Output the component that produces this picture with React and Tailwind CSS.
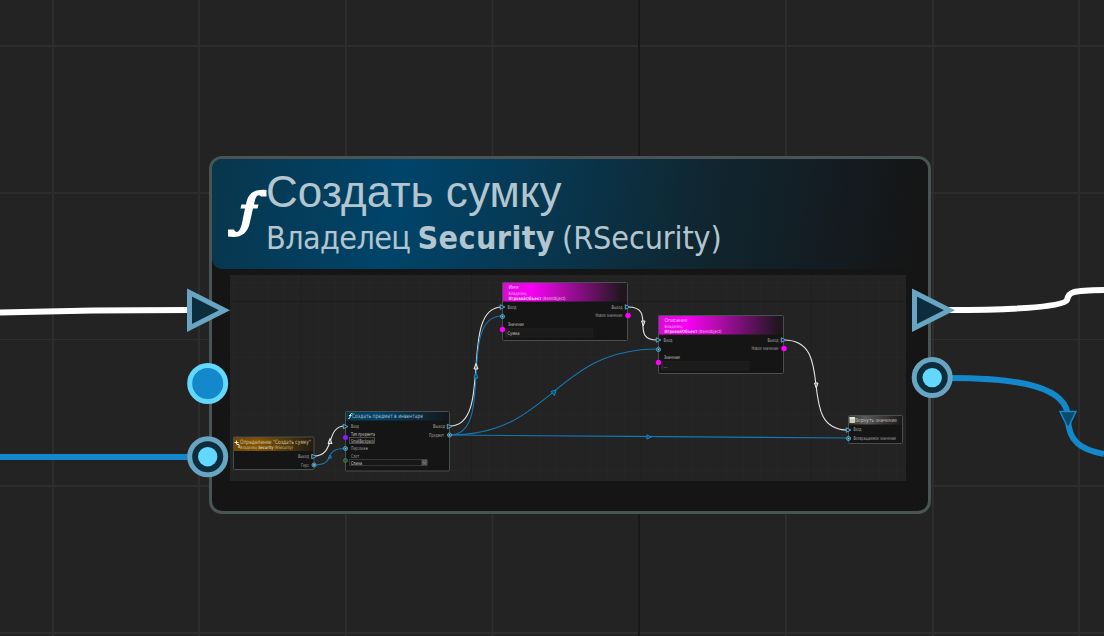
import React from 'react';

const gridX = [53, 199, 346, 492.5, 786, 933, 1079];
const gridY = [46, 193, 486, 633];
const miniX = [233, 250, 267, 284, 318, 335, 352, 369, 386, 403, 420, 437, 454, 488, 505, 522, 539, 556, 573, 590, 607, 624, 658, 675, 692, 709, 726, 743, 760, 777, 794, 828, 845, 862, 879, 896];
const miniY = [282.5, 357.5, 414.5, 470.5];

const tri = (x, y, s = 1) => `M${x - 3 * s} ${y - 3 * s}L${x + 3.2 * s} ${y}L${x - 3 * s} ${y + 3 * s}Z`;

function Label({ x, y, w, size = 5, className = '', children, color = '#aaa' }) {
  return (
    <text x={x} y={y} textLength={w} lengthAdjust="spacingAndGlyphs" fontSize={size} fill={color} className={className} fontFamily="'DejaVu Sans','Noto Sans',sans-serif">
      {children}
    </text>
  );
}

function Frame({ x, y, w, h, head, fill }) {
  return (
    <g>
      <rect x={x} y={y} width={w} height={h} rx="1" fill="#151515" />
      <rect x={x} y={y} width={w} height={head} fill={fill} />
      <rect x={x} y={y} width={w} height={h} rx="1" fill="none" stroke="#46504f" />
    </g>
  );
}

function ExecPin({ x, y }) {
  return <path d={tri(x, y, 0.75)} fill="#0d2a36" stroke="#63a5c4" strokeWidth="1" />;
}

function DataPin({ x, y }) {
  return (
    <g>
      <circle cx={x} cy={y} r="2" fill="#0d2a36" stroke="#5fa8c8" strokeWidth="1" />
      <circle cx={x} cy={y} r="1" fill="#62d8ff" />
    </g>
  );
}

function Backdrop() {
  return (
    <svg className="absolute inset-0" width="1104" height="636">
      {gridX.map((x) => <path key={x} d={`M${x} 0V636`} stroke="#2d2d2d" strokeWidth="2" />)}
      {gridY.map((y) => <path key={y} d={`M0 ${y}H1104`} stroke="#2d2d2d" strokeWidth="2" />)}
      <path d="M0 339.5H1104" stroke="#2e2e2e" />
      <path d="M639 0V636" stroke="#181818" strokeWidth="2" />
      <g fill="none" strokeWidth="6">
        <path d="M0 312.5C55 311 110 310 190 310" stroke="#fff" />
        <path d="M948 310C1000 310 1065 308 1067 300C1069 292 1071 290.5 1104 290" stroke="#fff" />
        <path d="M0 457H190" stroke="#1388ca" />
        <path d="M950 378C1020 378 1068 387 1068 418C1068 442 1082 450 1104 454" stroke="#1388ca" />
      </g>
      <path d="M1060 411.5H1076L1068 428Z" fill="#0a4a6c" stroke="#1388ca" strokeWidth="1.5" />
    </svg>
  );
}

function MagentaNode({ x, y, title, titleW, value, vw, inY }) {
  return (
    <g>
      <Frame x={x} y={y} w={125} h={58} head={19} fill="url(#pink)" />
      <Label x={x + 6} y={y + 6.5} w={titleW} size={5.5} color="#ffb5ff">{title}</Label>
      <Label x={x + 6} y={y + 12} w={18} size={4.5} color="#ffb5ff">Владелец</Label>
      <Label x={x + 6} y={y + 17} w={57} size={4.5} color="#f5c8f3"><tspan fontWeight="bold">ИгровойОбъект</tspan> (ItemObject)</Label>
      <Label x={x + 5} y={y + 26} w={9}>Вход</Label>
      <Label x={x + 109} y={y + 26} w={11}>Выход</Label>
      <Label x={x + 93} y={y + 34.5} w={27}>Новое значение</Label>
      <Label x={x + 5.5} y={y + 43.5} w={16} color="#d0c8bd">Значение</Label>
      <rect x={x + 3.5} y={y + 46} width="87" height="8.5" fill="#1b1b1b" stroke="#242424" strokeWidth=".5" />
      <path d={`M${x + 3.5} ${y + 46}v8.5`} stroke="#343434" />
      <Label x={x + 5} y={y + 52} w={vw} color="#d0c8bd">{value}</Label>
      <ExecPin x={x} y={y + 24.5} />
      <ExecPin x={x + 125} y={y + 24.5} />
      <DataPin x={x} y={y + inY} />
      <circle cx={x} cy={y + 47} r="2.7" fill="#f0f" />
      <circle cx={x + 125.5} cy={y + 33} r="2.7" fill="#f0f" />
    </g>
  );
}

function GraphPreview() {
  return (
    <svg className="block h-[206px] w-[676px] bg-[#232323]" viewBox="230 275 676 206">
      <defs>
        <linearGradient id="pink"><stop stopColor="#d80bd4" /><stop offset=".23" stopColor="#f800f4" /><stop offset=".45" stopColor="#b80bb3" /><stop offset=".95" stopColor="#211620" /></linearGradient>
        <linearGradient id="blue"><stop stopColor="#083850" /><stop offset=".3" stopColor="#00446b" /><stop offset="1" stopColor="#151719" /></linearGradient>
        <linearGradient id="amber"><stop stopColor="#704600" /><stop offset=".3" stopColor="#835300" /><stop offset="1" stopColor="#211b11" /></linearGradient>
        <linearGradient id="grey"><stop stopColor="#333" /><stop offset=".3" stopColor="#5a5a5a" /><stop offset="1" stopColor="#181818" /></linearGradient>
      </defs>
      {miniX.map((x) => <path key={x} d={`M${x}.5 275V481`} stroke="#252525" />)}
      {miniY.map((y) => <path key={y} d={`M230 ${y}H906`} stroke="#262626" />)}
      <path d="M301.500 275V481M471.500 275V481M641.500 275V481M811.500 275V481" stroke="#1f1f1f" fill="none" />
      <path d="M230 301.500H906" stroke="#1c1c1c" />
      <g fill="none" stroke="#e6e6e6" strokeWidth="1.1">
        <path d="M314 456C336 456 325 426 345 426" />
        <path d="M450 426C494 426 458 307 502 307" />
        <path d="M628 307C657 307 629 340 657 340" />
        <path d="M784 340C838 340 794 430 848 430" />
      </g>
      <g fill="none" stroke="#1479b2" strokeWidth="1.1">
        <path d="M314 465C338 465 321 448.500 345 448.500" />
        <path d="M450 435C496 435 456 316 502 316" />
        <path d="M450 435C553 435 553 349 658 349" />
        <path d="M450 435C560 435 730 438 848 438" />
      </g>
      <g fill="#777" stroke="#eee" strokeWidth="1">
        <path d="M328 443.500L330 438.500L332 443.500Z" />
        <path d="M474 369L476 363.500L478 369Z" />
        <path d="M641.500 321H645L643.300 326Z" />
        <path d="M814.500 383H818L816.300 388Z" />
      </g>
      <g fill="#0a4a6c" stroke="#1a87c0" strokeWidth="1">
        <path d="M328.500 458L330 455L331.500 458Z" />
        <path d="M474 378L476 373L478 378Z" />
        <path d="M551 391.500L556 390L554.500 395.500Z" />
        <path d={tri(649, 437, 0.7)} />
      </g>

      <Frame x={233.5} y={437} w={80.500} h={32.500} head={14} fill="url(#amber)" />
      <path d="M234.500 442.500h4M236.500 440.500v4M237 444.500h2v3.500" fill="none" stroke="#fff" strokeWidth=".9" />
      <Label x={240} y={443.500} w={71} size={6} color="#d3c3a4">Определение "Создать сумку"</Label>
      <Label x={240} y={449.300} w={53} size={4.5} color="#d3c3a4">Владелец <tspan fontWeight="bold">Security</tspan> (RSecurity)</Label>
      <Label x={298} y={458} w={11}>Выход</Label>
      <Label x={301} y={466.500} w={8}>Герс</Label>
      <ExecPin x={314} y={456.500} />
      <DataPin x={314} y={465} />

      <Frame x={345.500} y={411.500} w={104} h={59.500} head={9} fill="url(#blue)" />
      <path d="M352.500 413.700c-1.500-.7-2 .5-2.300 2.300s-.6 3-1.800 2.500M349 415.500h2.500" stroke="#fff" strokeWidth=".9" fill="none" />
      <Label x={352} y={418} w={71} size={6} color="#a9bdc8">Создать предмет в инвентаре</Label>
      <Label x={351} y={428} w={8}>Вход</Label>
      <Label x={433} y={428} w={12}>Выход</Label>
      <Label x={429} y={437} w={15}>Предмет</Label>
      <Label x={351} y={436} w={24} color="#d5d0c4">Тип предмета</Label>
      <rect x="349.500" y="437.500" width="25" height="6" fill="#181818" stroke="#58636a" strokeWidth=".7" />
      <Label x={351} y={442.500} w={23} color="#d0c4b5">SmallBackpack</Label>
      <Label x={351} y={450} w={17}>Персонаж</Label>
      <Label x={351} y={457.500} w={8}>Слот</Label>
      <rect x="349.500" y="459.500" width="77" height="6" fill="#171717" stroke="#454545" strokeWidth=".7" />
      <rect x="421.500" y="459.500" width="6" height="6" fill="#555" />
      <path d="M423 462l1.500 1.500l1.500-1.500" stroke="#999" strokeWidth=".7" fill="none" />
      <Label x={351} y={464.500} w={11} color="#ddd">Спина</Label>
      <ExecPin x={345.500} y={426.500} />
      <ExecPin x={449.500} y={426.500} />
      <DataPin x={449.500} y={435} />
      <DataPin x={345.500} y={448.500} />
      <circle cx="345.500" cy="437.500" r="2.500" fill="#8d19ff" />
      <circle cx="345.500" cy="460.500" r="2" fill="#285737" stroke="#5b8069" strokeWidth=".7" />

      <MagentaNode x={502.500} y={282.500} title="Имя" titleW={10} value="Сумка" vw={12} inY={34} />
      <MagentaNode x={658.500} y={315.500} title="Описание" titleW={23} value="..." vw={4} inY={34} />

      <Frame x={848.500} y={415.500} w={54} h={28} head={9} fill="url(#grey)" />
      <rect x="849.500" y="417" width="5.500" height="6" fill="#cbcbb8" />
      <path d="M849.500 418h5.500" stroke="#fff" strokeWidth="1" />
      <Label x={855} y={422} w={42} size={5.5} color="#c5bdb4">Вернуть значение</Label>
      <Label x={853.500} y={431} w={8}>Вход</Label>
      <Label x={853.500} y={439.500} w={42.500}>Возвращаемое значение</Label>
      <ExecPin x={848.500} y={430} />
      <DataPin x={848.500} y={438.500} />
    </svg>
  );
}

function Pins() {
  const ring = (cx, cy) => (
    <g>
      <circle cx={cx} cy={cy} r="18" fill="#0d2d3c" stroke="#68a5c3" strokeWidth="5" />
      <circle cx={cx} cy={cy} r="9.700" fill="#62d8ff" />
    </g>
  );
  return (
    <svg className="pointer-events-none absolute inset-0" width="1104" height="636">
      <path d="M189.500 292.500L224.500 310.200L189.500 328Z" fill="#0d2d3c" stroke="#68a5c3" strokeWidth="5" />
      <path d="M914.500 292.500L949.500 310.200L914.500 328Z" fill="#0d2d3c" stroke="#68a5c3" strokeWidth="5" />
      <circle cx="207.700" cy="383.500" r="18" fill="#1388ca" stroke="#62d8ff" strokeWidth="5" />
      {ring(207.7, 456.7)}
      {ring(932.2, 377.600)}
    </svg>
  );
}

export default function App() {
  return (
    <main className="relative h-[636px] w-[1104px] overflow-hidden bg-[#232323]">
      <Backdrop />
      <section className="absolute left-[209px] top-[156px] flex h-[358px] w-[722px] flex-col overflow-hidden rounded-[13px] border-3 border-[#4a5454] bg-[#151515]">
        <header className="flex h-[110px] shrink-0 rounded-bl-[10px] bg-[linear-gradient(100deg,#08364c_0%,#00446a_26%,#08364e_48%,#102630_68%,#141b20_87%,#151515_98%)] pl-[16px] text-[#b3c5ce]">
          <svg className="mt-[29px] h-[51px] w-[39px] shrink-0 blur-[0.5px]" viewBox="0 0 39 51">
            <path d="M38.500 2V8.500H33C31 6 28 7.500 27 12L26 16.500H30.500L29.500 20.500H25L21.500 36C19 46 12 50.500 0 48.500V41.500H6C8 46 12 44.500 14 35L17 20.500H12.500L13.500 16.500H18C20 5 26 1 38.500 2Z" fill="#fff" />
          </svg>
          <div className="whitespace-nowrap">
            <h1 className="mt-[8px] -ml-px h-[49px] font-['Liberation_Sans',sans-serif] text-[44px] leading-[49px] tracking-[0.05px]">Создать сумку</h1>
            <p className="mt-[2px] -ml-px font-['DejaVu_Sans_Condensed','DejaVu_Sans',sans-serif] text-[32px] leading-[40px] tracking-[-0.6px] [word-spacing:-1.5px]">Владелец <b className="tracking-[0.4px]">Security</b> <span className="tracking-[-0.1px]">(RSecurity)</span></p>
          </div>
        </header>
        <div className="ml-[18px] mt-[6px]"><GraphPreview /></div>
      </section>
      <Pins />
    </main>
  );
}
